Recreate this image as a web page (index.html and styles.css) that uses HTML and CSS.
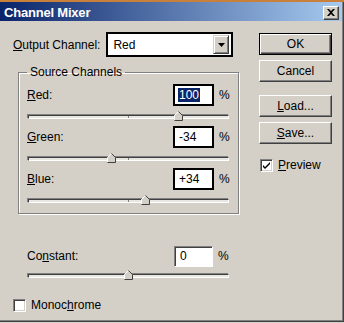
FILE: index.html
```html
<!DOCTYPE html>
<html lang="en">
<head>
    <meta charset="UTF-8">
    <title>Channel Mixer</title>
    <link rel="stylesheet" href="styles.css">
</head>
<body>
    <div class="window">
        <div class="titlebar">
            <span class="title">Channel Mixer</span>
            <span class="close-btn">
                <svg width="8" height="7" viewBox="0 0 8 7"><path d="M0 0h2l2 2 2-2h2L5 3.5 8 7H6L4 5 2 7H0l3-3.5z" fill="#000"/></svg>
            </span>
        </div>
        <div class="content">
            <div class="main">
                <div class="output-row">
                    <span class="label"><u>O</u>utput Channel:</span>
                    <div class="select">
                        <span class="select-value">Red</span>
                        <span class="select-arrow">
                            <svg width="7" height="4" viewBox="0 0 7 4"><path d="M0 0h7L3.5 4z" fill="#000"/></svg>
                        </span>
                    </div>
                </div>

                <fieldset class="group">
                    <legend>Source Channels</legend>
                    <div class="channel">
                        <div class="field-row">
                            <span class="label"><u>R</u>ed:</span>
                            <span class="num-input dark"><span class="selected-text">100</span></span>
                            <span class="pct">%</span>
                        </div>
                        <div class="slider">
                            <span class="track"></span>
                            <svg class="thumb" style="left: 146px" width="9" height="10" viewBox="0 0 9 10"><path d="M4.5 0.5L8.5 4.5V9.5H0.5V4.5Z" fill="#d4d0c8"/><path d="M0.5 9V4.5L4.5 0.5" fill="none" stroke="#fff"/><path d="M4.5 0.5L8.5 4.5V9.5H0.5" fill="none" stroke="#404040"/></svg>
                        </div>
                    </div>
                    <div class="channel">
                        <div class="field-row">
                            <span class="label"><u>G</u>reen:</span>
                            <span class="num-input dark">-34</span>
                            <span class="pct">%</span>
                        </div>
                        <div class="slider">
                            <span class="track"></span>
                            <svg class="thumb" style="left: 79px" width="9" height="10" viewBox="0 0 9 10"><path d="M4.5 0.5L8.5 4.5V9.5H0.5V4.5Z" fill="#d4d0c8"/><path d="M0.5 9V4.5L4.5 0.5" fill="none" stroke="#fff"/><path d="M4.5 0.5L8.5 4.5V9.5H0.5" fill="none" stroke="#404040"/></svg>
                        </div>
                    </div>
                    <div class="channel">
                        <div class="field-row">
                            <span class="label"><u>B</u>lue:</span>
                            <span class="num-input dark">+34</span>
                            <span class="pct">%</span>
                        </div>
                        <div class="slider">
                            <span class="track"></span>
                            <svg class="thumb" style="left: 113px" width="9" height="10" viewBox="0 0 9 10"><path d="M4.5 0.5L8.5 4.5V9.5H0.5V4.5Z" fill="#d4d0c8"/><path d="M0.5 9V4.5L4.5 0.5" fill="none" stroke="#fff"/><path d="M4.5 0.5L8.5 4.5V9.5H0.5" fill="none" stroke="#404040"/></svg>
                        </div>
                    </div>
                </fieldset>

                <div class="constant">
                    <div class="field-row">
                        <span class="label">Co<u>n</u>stant:</span>
                        <span class="num-input sunken">0</span>
                        <span class="pct">%</span>
                    </div>
                    <div class="slider">
                        <span class="track"></span>
                        <svg class="thumb" style="left: 96px" width="9" height="10" viewBox="0 0 9 10"><path d="M4.5 0.5L8.5 4.5V9.5H0.5V4.5Z" fill="#d4d0c8"/><path d="M0.5 9V4.5L4.5 0.5" fill="none" stroke="#fff"/><path d="M4.5 0.5L8.5 4.5V9.5H0.5" fill="none" stroke="#404040"/></svg>
                    </div>
                </div>

                <div class="check-row mono">
                    <span class="checkbox"></span>
                    <span>Monoc<u>h</u>rome</span>
                </div>
            </div>

            <div class="buttons">
                <div class="btn default">OK</div>
                <div class="btn">Cancel</div>
                <div class="btn spaced"><u>L</u>oad...</div>
                <div class="btn"><u>S</u>ave...</div>
                <div class="check-row preview">
                    <span class="checkbox">
                        <svg width="7" height="7" viewBox="0 0 7 7"><path d="M0 2l2 2 5-5v2L2 6 0 4z" fill="#000" transform="translate(0 1)"/></svg>
                    </span>
                    <span><u>P</u>review</span>
                </div>
            </div>
        </div>
    </div>
</body>
</html>
```

FILE: styles.css
```css
body {
    margin: 0;
    background-color: #d4d0c8;
    font-family: "Liberation Sans", Arial, sans-serif;
    font-size: 12px;
    color: #000;
}

.window {
    width: 344px;
    height: 322px;
    box-sizing: border-box;
    border-top: 2px solid #c9803a;
    background-color: #d4d0c8;
    box-shadow: inset -1px -1px 0 #404040, inset -2px -2px 0 #808080;
}

.titlebar {
    height: 19px;
    margin-right: 2px;
    background: linear-gradient(to right, #0a246a, #a6caf0);
    display: flex;
    align-items: center;
    justify-content: space-between;
    padding: 0 3px 0 4px;
}

.title {
    color: #fff;
    font-weight: bold;
    font-size: 13px;
    letter-spacing: -0.2px;
    padding-top: 2px;
}

.close-btn {
    width: 16px;
    height: 14px;
    box-sizing: border-box;
    margin-top: 2px;
    background-color: #d4d0c8;
    border: 1px solid;
    border-color: #fff #404040 #404040 #fff;
    box-shadow: inset -1px -1px 0 #808080;
    display: flex;
    align-items: center;
    justify-content: center;
}

.content {
    display: flex;
}

.main {
    width: 246px;
    padding: 11px 0 0 13px;
    box-sizing: border-box;
}

.label u,
.btn u,
.check-row u {
    text-decoration-thickness: 1px;
    text-underline-offset: 1px;
}

.output-row {
    display: flex;
    align-items: center;
    gap: 6px;
}

.select {
    width: 127px;
    height: 25px;
    box-sizing: border-box;
    border: 2px solid #000;
    background-color: #fff;
    display: flex;
    align-items: center;
    justify-content: space-between;
    padding: 0 2px 0 5px;
}

.select-arrow {
    width: 16px;
    height: 19px;
    box-sizing: border-box;
    background-color: #d4d0c8;
    border: 1px solid;
    border-color: #d4d0c8 #404040 #404040 #d4d0c8;
    box-shadow: inset 1px 1px 0 #fff, inset -1px -1px 0 #808080;
    display: flex;
    align-items: center;
    justify-content: center;
}

.group {
    margin: 8px 0 0 5px;
    width: 221px;
    box-sizing: border-box;
    padding: 5px 0 8px 8px;
    border: 1px solid #808080;
    box-shadow: 1px 1px 0 #fff, inset 1px 1px 0 #fff;
}

.group legend {
    padding: 0 3px;
    margin-left: 0;
    line-height: 14px;
}

.channel + .channel {
    margin-top: 5px;
}

.field-row {
    display: flex;
    align-items: center;
    height: 22px;
}

.field-row .label {
    width: 146px;
}

.num-input {
    width: 41px;
    height: 22px;
    box-sizing: border-box;
    background-color: #fff;
    display: flex;
    align-items: center;
}

.num-input.dark {
    border: 2px solid #000;
    padding-left: 4px;
}

.num-input.sunken {
    width: 39px;
    height: 21px;
    margin-left: 1px;
    border: 1px solid;
    border-color: #808080 #fff #fff #808080;
    box-shadow: inset 1px 1px 0 #404040;
    padding-left: 5px;
}

.selected-text {
    background-color: #0a246a;
    color: #fff;
    margin-left: -1px;
    padding: 0 1px;
}

.pct {
    margin-left: 5px;
}

.slider {
    position: relative;
    width: 201px;
    height: 10px;
    margin: 5px 0 0 1px;
}

.track {
    display: block;
    position: absolute;
    left: 0;
    right: 0;
    top: 4px;
    height: 4px;
    box-sizing: border-box;
    border: 1px solid;
    border-color: #404040 #fff #fff #404040;
    box-shadow: -1px -1px 0 #808080;
    background: linear-gradient(#808080, #808080) 99px 0 / 1px 100% no-repeat, #e8e6e0;
}

.thumb {
    position: absolute;
    top: 0;
}

.constant {
    margin: 31px 0 0 14px;
}

.constant .slider {
    margin-top: 3px;
}

.check-row {
    display: flex;
    align-items: center;
    gap: 5px;
}

.mono {
    margin-top: 18px;
}

.checkbox {
    width: 13px;
    height: 13px;
    box-sizing: border-box;
    background-color: #fff;
    border: 1px solid;
    border-color: #808080 #fff #fff #808080;
    box-shadow: inset 1px 1px 0 #404040, inset -1px -1px 0 #d4d0c8;
    display: flex;
    align-items: center;
    justify-content: center;
}

.buttons {
    margin-left: 13px;
    padding-top: 12px;
    display: flex;
    flex-direction: column;
    gap: 5px;
}

.btn {
    width: 73px;
    height: 22px;
    box-sizing: border-box;
    background-color: #d4d0c8;
    border: 1px solid;
    border-color: #fff #404040 #404040 #fff;
    box-shadow: inset -1px -1px 0 #808080;
    display: flex;
    align-items: center;
    justify-content: center;
}

.btn.default {
    border-color: #000;
    box-shadow: inset 1px 1px 0 #fff, inset -1px -1px 0 #404040, inset -2px -2px 0 #808080;
}

.btn.spaced {
    margin-top: 8px;
}

.preview {
    margin: 9px 0 0 1px;
}
```
